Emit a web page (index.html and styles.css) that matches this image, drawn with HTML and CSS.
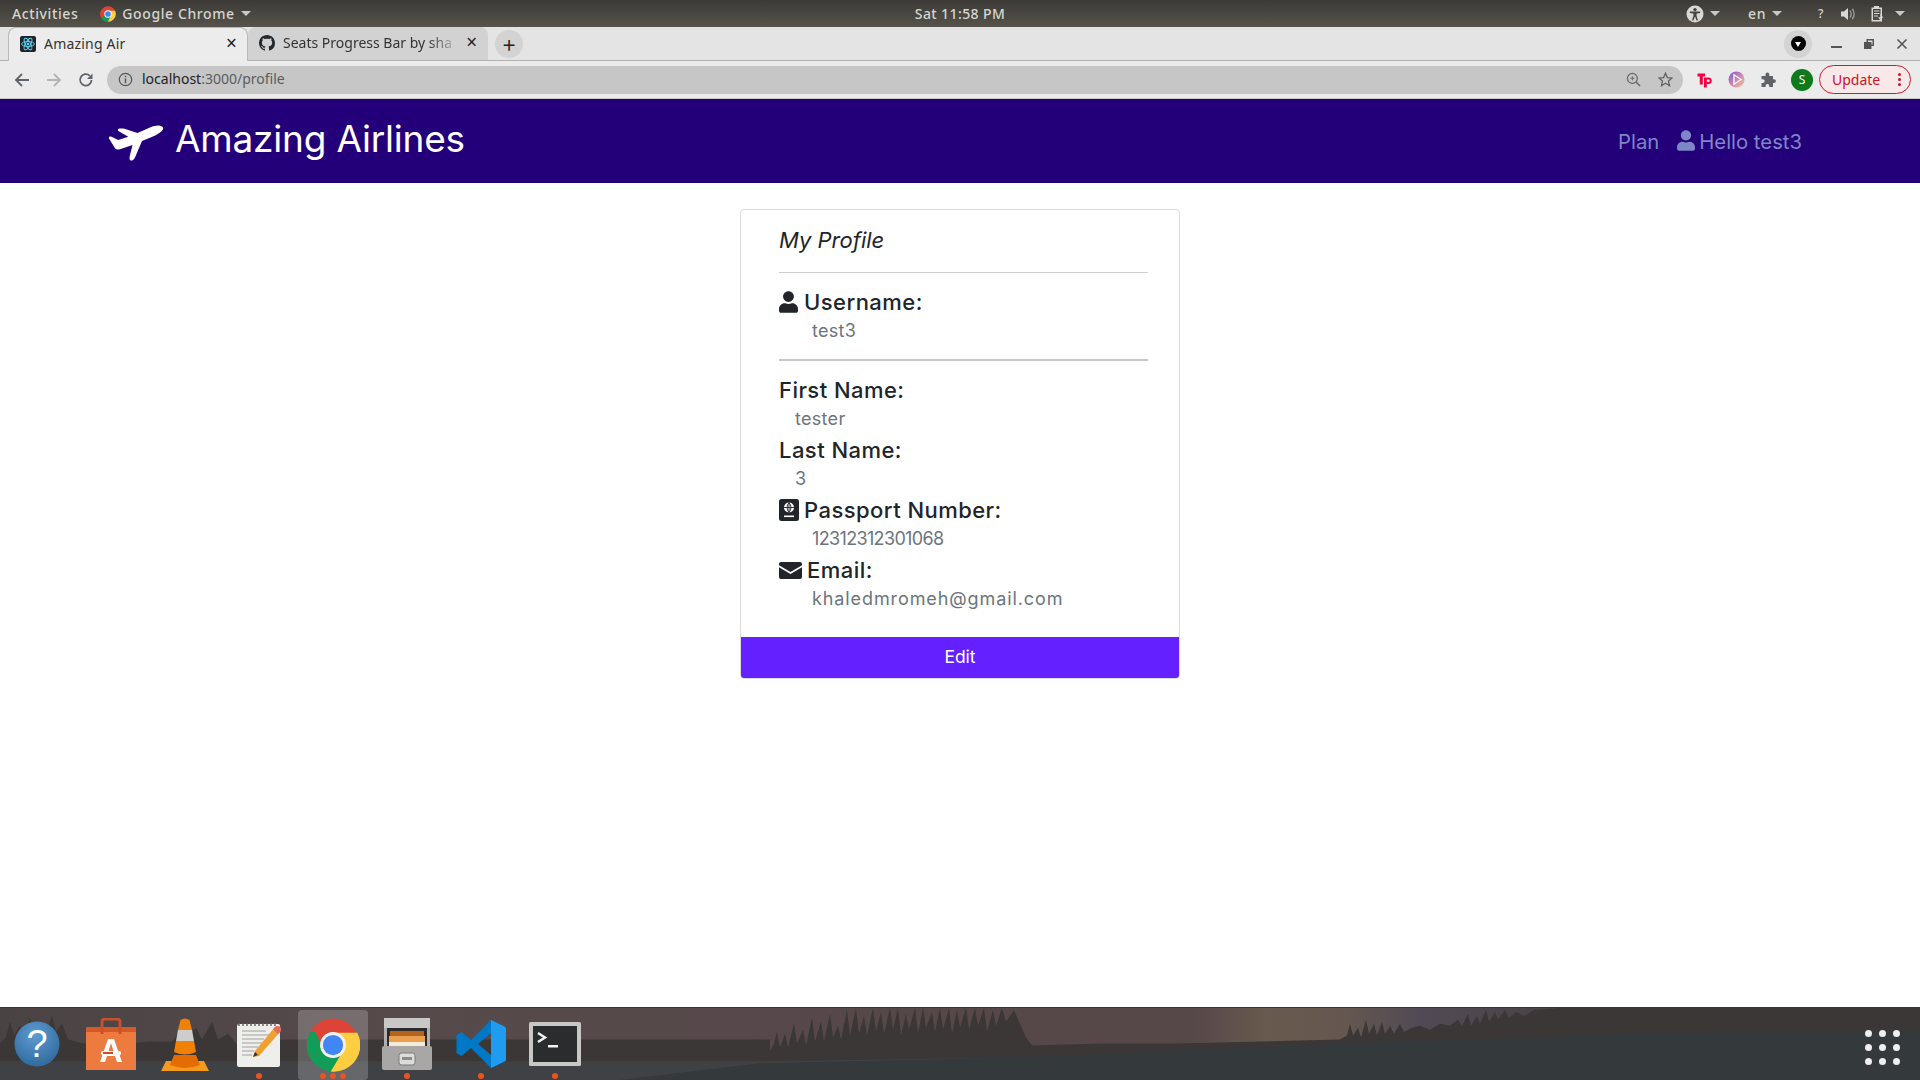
FILE: index.html
```html
<!DOCTYPE html>
<html>
<head>
  <meta charset="utf-8">
  <title>Amazing Air</title>
  <link rel="stylesheet" href="styles.css">
</head>
<body>
  <div class="screen">
    <div class="topbar">
      <div class="topbar-left">
        <span class="top-item">Activities</span>
        <span class="top-item app-menu">
          <svg class="top-chrome" viewBox="0 0 48 48"><circle cx="24" cy="24" r="23" fill="#db4437"/><path d="M24 24 L4 36 A23 23 0 0 1 4 12 Z" fill="#db4437"/><path d="M24 24 L4 35 A23 23 0 0 0 24 47 L36 26 Z" fill="#0f9d58"/><path d="M24 14 H45 A23 23 0 0 1 24 47 L34 26 Z" fill="#ffcd40"/><circle cx="24" cy="24" r="11" fill="#fff"/><circle cx="24" cy="24" r="8.5" fill="#4285f4"/></svg>
          Google Chrome<i class="caret"></i>
        </span>
      </div>
      <span class="top-clock">Sat 11:58 PM</span>
      <div class="topbar-right">
        <span class="tray-a11y">
          <svg width="18" height="18" viewBox="0 0 18 18"><circle cx="9" cy="9" r="8.5" fill="#d8d8d4"/><circle cx="9" cy="4.6" r="1.7" fill="#47453f"/><path d="M3.8 6.6 H14.2 V8 L10.6 8.6 V11 L12 15.5 H10.6 L9 11.6 L7.4 15.5 H6 L7.4 11 V8.6 L3.8 8 Z" fill="#47453f"/></svg>
          <i class="caret"></i>
        </span>
        <span class="tray-lang">en<i class="caret"></i></span>
        <span class="tray-help">?</span>
        <svg class="tray-vol" width="16" height="16" viewBox="0 0 16 16"><path d="M1 5.5 H4 L8 2 V14 L4 10.5 H1 Z" fill="#d8d8d4"/><path d="M10 4.5 Q12.4 8 10 11.5 M12.4 2.8 Q15.8 8 12.4 13.2" stroke="#a5a49f" stroke-width="1.2" fill="none"/></svg>
        <span class="tray-batt">
          <svg width="14" height="18" viewBox="0 0 14 18"><path d="M4 1 H9 V2.5 H12 V16.5 H1.5 V2.5 H4 Z M3 4 V15 H10.5 V4 Z" fill="#d8d8d4" fill-rule="evenodd"/><path d="M4 6 H9.5 M4 8.5 H9.5 M4 11 H8" stroke="#d8d8d4" stroke-width="1.2"/><path d="M10 9 L13.5 12.5 L10.5 13 L12 17 L8 12.5 L10.5 12 Z" fill="#d8d8d4"/></svg>
          <i class="caret"></i>
        </span>
      </div>
    </div>

    <div class="tabstrip">
      <div class="tab tab-active">
        <svg class="favicon" viewBox="0 0 16 16"><rect width="16" height="16" rx="2" fill="#20232a"/><g fill="none" stroke="#61dafb" stroke-width=".9"><ellipse cx="8" cy="8" rx="6.4" ry="2.5"/><ellipse cx="8" cy="8" rx="6.4" ry="2.5" transform="rotate(60 8 8)"/><ellipse cx="8" cy="8" rx="6.4" ry="2.5" transform="rotate(120 8 8)"/></g><circle cx="8" cy="8" r="1.3" fill="#61dafb"/></svg>
        <span class="tab-title">Amazing Air</span>
        <span class="tab-close">×</span>
      </div>
      <div class="tab tab-idle">
        <svg class="favicon" viewBox="0 0 16 16"><path fill="#24292e" d="M8 0C3.58 0 0 3.58 0 8c0 3.54 2.29 6.53 5.47 7.59.4.07.55-.17.55-.38 0-.19-.01-.82-.01-1.49-2.01.37-2.53-.49-2.69-.94-.09-.23-.48-.94-.82-1.13-.28-.15-.68-.52-.01-.53.63-.01 1.08.58 1.23.82.72 1.21 1.87.87 2.33.66.07-.52.28-.87.51-1.07-1.78-.2-3.64-.89-3.64-3.95 0-.87.31-1.59.82-2.15-.08-.2-.36-1.02.08-2.12 0 0 .67-.21 2.2.82.64-.18 1.32-.27 2-.27s1.36.09 2 .27c1.53-1.04 2.2-.82 2.2-.82.44 1.1.16 1.92.08 2.12.51.56.82 1.27.82 2.15 0 3.07-1.87 3.75-3.65 3.95.29.25.54.73.54 1.48 0 1.07-.01 1.93-.01 2.2 0 .21.15.46.55.38A8.01 8.01 0 0 0 16 8c0-4.42-3.58-8-8-8z"/></svg>
        <span class="tab-title tab-fade">Seats Progress Bar by sha</span>
        <span class="tab-close">×</span>
      </div>
      <span class="new-tab">+</span>
      <span class="strip-space"></span>
      <span class="profile-dot"><i></i></span>
      <div class="win-controls">
        <i class="win-min"></i>
        <svg width="12" height="12" viewBox="0 0 12 12"><path d="M3.5 1 H11 V8 H8.5 V11 H1 V4 H3.5 Z M5 2.5 V4 H8.5 V6.5 H9.5 V2.5 Z" fill="#555" fill-rule="evenodd"/></svg>
        <svg width="12" height="12" viewBox="0 0 12 12"><path d="M1.5 1.5 L10.5 10.5 M10.5 1.5 L1.5 10.5" stroke="#555" stroke-width="1.6"/></svg>
      </div>
    </div>

    <div class="toolbar">
      <svg class="tool-btn" viewBox="0 0 16 16"><path d="M15 8 H2.5 M8 2 L2 8 L8 14" fill="none" stroke="#5f6368" stroke-width="1.8"/></svg>
      <svg class="tool-btn" viewBox="0 0 16 16"><path d="M1 8 H13.5 M8 2 L14 8 L8 14" fill="none" stroke="#b2b3b5" stroke-width="1.8"/></svg>
      <svg class="tool-btn" viewBox="0 0 16 16"><path d="M13.5 8 A5.7 5.7 0 1 1 11.8 3.8" fill="none" stroke="#5f6368" stroke-width="1.8"/><path d="M14.5 1.5 V7 H9 Z" fill="#5f6368"/></svg>
      <div class="omnibox">
        <svg class="omni-info" viewBox="0 0 16 16"><circle cx="8" cy="8" r="6.6" fill="none" stroke="#555" stroke-width="1.3"/><path d="M8 7 V12 M8 4 V5.6" stroke="#555" stroke-width="1.5"/></svg>
        <span class="url"><b>localhost</b>:3000/profile</span>
        <span class="strip-space"></span>
        <svg class="omni-icon" viewBox="0 0 16 16"><circle cx="6.8" cy="6.8" r="5.3" fill="none" stroke="#666" stroke-width="1.3"/><path d="M10.6 10.6 L15 15" stroke="#666" stroke-width="1.6"/><path d="M4.5 6.8 H9 M6.8 4.5 V9" stroke="#666" stroke-width="1"/></svg>
        <svg class="omni-icon" viewBox="0 0 16 16"><path d="M8 1.3 L10 5.9 L15 6.4 L11.2 9.7 L12.3 14.6 L8 12 L3.7 14.6 L4.8 9.7 L1 6.4 L6 5.9 Z" fill="none" stroke="#5f6368" stroke-width="1.4"/></svg>
      </div>
      <div class="ext-icons">
        <svg width="16" height="16" viewBox="0 0 16 16"><path d="M0.5 1.5 H8 V4.5 H5.8 V12.5 H2.8 V4.5 H0.5 Z" fill="#f5003c"/><path d="M7 5.5 H12 A3.3 3.3 0 0 1 12 12 H9.8 V15.5 H7 Z M9.8 7.5 V10 H11.5 A1.2 1.2 0 0 0 11.5 7.5 Z" fill="#f5003c" fill-rule="evenodd"/></svg>
        <svg width="17" height="17" viewBox="0 0 17 17"><defs><linearGradient id="playGrad" x1="0" y1="0" x2="1" y2="1"><stop offset="0" stop-color="#7a55c9"/><stop offset=".55" stop-color="#d68bb4"/><stop offset="1" stop-color="#f2cf8d"/></linearGradient></defs><circle cx="8.5" cy="8.5" r="8" fill="url(#playGrad)"/><path d="M6 3.8 L13 8.5 L6 13.2 Z" fill="none" stroke="#fff" stroke-width="1.3"/></svg>
        <svg width="16" height="16" viewBox="0 0 16 16"><path d="M5.5 2.5 A1.9 1.9 0 0 1 9.3 2.5 V4 H13 V7.2 H14 A1.9 1.9 0 0 1 14 11 H13 V15 H9.2 V13.7 A1.8 1.8 0 0 0 5.6 13.7 V15 H1.5 V11 H2.8 A1.9 1.9 0 0 0 2.8 7.2 H1.5 V4 H5.5 Z" fill="#5f6368"/></svg>
        <span class="avatar">S</span>
      </div>
      <div class="update-btn">Update<span class="update-dots"><i></i><i></i><i></i></span></div>
    </div>

    <nav class="navbar">
      <div class="brand">
        <svg class="brand-plane" viewBox="0 0 56 38"><path fill="#fff" d="M1 15.5 C0.5 14 2 13.2 3.5 13.8 L10.2 17 L20.3 13.7 L10.7 8.3 C9 7.2 10 6 11.5 5.6 C12.8 5.2 14.8 5.4 16.5 5.8 L29.5 10 L42.5 4.3 C46.5 2.8 51 1.6 54 3.6 C56.2 5.2 55 7 52 9.4 C49 11.6 45.5 13.4 42.6 14.4 L34 18 L27 34.5 C26 37 23.5 38.2 22.3 37.3 C21.2 36.5 21.4 34.5 22 32 L24.5 22 L12 26.2 C9.8 26.8 8.3 26.8 7.2 25.6 Z"/></svg>
        <span class="brand-name">Amazing Airlines</span>
      </div>
      <div class="nav-links">
        <a class="nav-link">Plan</a>
        <a class="nav-link nav-user">
          <svg class="nav-user-icon" viewBox="0 0 448 512"><path fill="#7d87c6" d="M224 256c70.700 0 128-57.300 128-128S294.700 0 224 0 96 57.300 96 128s57.300 128 128 128zm89.600 32h-16.700c-22.200 10.200-46.900 16-72.900 16s-50.600-5.800-72.900-16h-16.700C60.200 288 0 348.200 0 422.400V464c0 26.500 21.500 48 48 48h352c26.500 0 48-21.500 48-48v-41.600c0-74.200-60.200-134.400-134.400-134.400z"/></svg>
          Hello test3
        </a>
      </div>
    </nav>

    <main class="content">
      <section class="profile-card">
        <div class="card-body">
          <h2 class="card-title">My Profile</h2>
          <hr class="rule">
          <div class="field">
            <h3 class="field-label">
              <svg class="label-icon icon-user" viewBox="0 0 448 512"><path fill="#212529" d="M224 256c70.700 0 128-57.300 128-128S294.700 0 224 0 96 57.300 96 128s57.300 128 128 128zm89.600 32h-16.700c-22.200 10.200-46.900 16-72.900 16s-50.600-5.800-72.900-16h-16.700C60.200 288 0 348.200 0 422.400V464c0 26.500 21.500 48 48 48h352c26.500 0 48-21.500 48-48v-41.600c0-74.200-60.200-134.400-134.400-134.400z"/></svg>
              Username:
            </h3>
            <p class="field-value deep">test3</p>
          </div>
          <hr class="rule rule-thick">
          <div class="field">
            <h3 class="field-label">First Name:</h3>
            <p class="field-value">tester</p>
          </div>
          <div class="field">
            <h3 class="field-label">Last Name:</h3>
            <p class="field-value">3</p>
          </div>
          <div class="field">
            <h3 class="field-label">
              <svg class="label-icon icon-passport" viewBox="0 0 20 22"><rect width="20" height="22" rx="2.500" fill="#212529"/><circle cx="10" cy="8.500" r="5" fill="#fff"/><path d="M10 3.500 V13.500 M5 8.500 H15 M10 3.500 Q6 8.500 10 13.500 M10 3.500 Q14 8.500 10 13.500" stroke="#212529" stroke-width=".9" fill="none"/><rect x="5" y="16.500" width="10" height="1.600" fill="#fff"/></svg>
              Passport Number:
            </h3>
            <p class="field-value deep digits">12312312301068</p>
          </div>
          <div class="field">
            <h3 class="field-label">
              <svg class="label-icon icon-mail" viewBox="0 0 23 17"><path fill="#212529" d="M2 0 H21 A2 2 0 0 1 23 2 V3.200 L11.500 10 L0 3.200 V2 A2 2 0 0 1 2 0 Z M0 5.200 L11.500 12 L23 5.200 V15 A2 2 0 0 1 21 17 H2 A2 2 0 0 1 0 15 Z"/></svg>
              Email:
            </h3>
            <p class="field-value deep wide">khaledmromeh@gmail.com</p>
          </div>
        </div>
        <button class="edit-btn">Edit</button>
      </section>
    </main>

    <footer class="dock">
      <svg class="dock-scene" viewBox="0 0 1920 73" preserveAspectRatio="none">
        <defs>
          <linearGradient id="sky" x1="0" y1="0" x2="1" y2="0">
            <stop offset="0" stop-color="#4a4344"/><stop offset=".2" stop-color="#564a4b"/><stop offset=".62" stop-color="#564749"/>
            <stop offset=".66" stop-color="#685a4e"/><stop offset=".7" stop-color="#655750"/><stop offset=".74" stop-color="#514a55"/><stop offset=".8" stop-color="#4a4448"/><stop offset="1" stop-color="#333230"/>
          </linearGradient>
        </defs>
        <rect width="1920" height="73" fill="url(#sky)"/>
        <g fill="#3a3736">
          <path d="M0 36 L6 30 L10 14 L14 28 L20 18 L24 30 L30 10 L34 26 L40 14 L45 30 L52 8 L56 24 L62 16 L68 32 L84 36 L96 30 L102 22 L108 34 L118 26 L126 36 L150 34 L172 34 L180 24 L186 32 L196 20 L202 32 L212 14 L218 32 L228 26 L236 36 L262 36 L282 32 L300 32 V60 H0 Z"/>
          <path d="M300 32 H770 V55 H300 Z"/>
          <path d="M770 44 L774 36 L777 24 L780 40 L785 26 L788 40 L794 16 L797 36 L803 22 L806 38 L812 10 L815 34 L821 14 L824 34 L830 6 L833 30 L838 18 L841 32 L847 2 L850 28 L856 0 L859 26 L864 8 L867 28 L873 0 L876 24 L881 4 L884 26 L890 0 L893 22 L898 0 L901 28 L906 6 L909 22 L915 0 L918 26 L923 0 L926 20 L932 4 L935 24 L940 0 L943 22 L949 0 L952 26 L957 2 L960 20 L966 0 L969 22 L975 0 L978 18 L984 0 L987 24 L993 2 L996 18 L1002 0 L1006 14 L1014 2 L1020 16 L1026 30 L1032 38 L1100 36 L1180 36 L1260 34 L1340 32 L1347 28 L1350 16 L1353 28 L1358 20 L1361 30 L1366 12 L1369 26 L1374 16 L1377 28 L1382 14 L1385 26 L1390 18 L1394 26 L1400 16 L1404 24 L1412 20 L1420 18 L1430 22 L1440 16 L1450 18 L1458 12 L1462 18 L1468 6 L1471 18 L1477 8 L1480 16 L1486 2 L1489 14 L1495 4 L1498 12 L1505 2 L1509 10 L1516 4 L1524 8 L1534 2 L1560 0 L1920 0 V60 H1032 V55 H770 Z"/>
        </g>
        <path fill="#3f4145" d="M0 54 H760 L1030 50 L1300 38 L1640 26 L1920 22 V73 H0 Z"/>
        <path fill="#34393b" d="M620 73 L760 56 L1030 50 L1300 38 L1640 26 L1920 22 V73 Z"/>
      </svg>
      <div class="dock-apps">
        <div class="dock-app app-help"><svg width="46" height="46" viewBox="0 0 46 46"><defs><radialGradient id="helpBall" cx=".45" cy=".3" r=".8"><stop offset="0" stop-color="#5d9bd1"/><stop offset="1" stop-color="#2c6597"/></radialGradient></defs><circle cx="23" cy="23" r="22.500" fill="url(#helpBall)"/><text x="23" y="36" class="help-mark">?</text></svg></div>
        <div class="dock-app app-store"><svg width="50" height="52" viewBox="0 0 50 52"><rect x="0" y="9" width="50" height="43" fill="#ed7a3e"/><path d="M0 9 H50 V14 H0 Z" fill="#d55a2a"/><path d="M16 16 V4 Q16 1 19 1 H31 Q34 1 34 4 V16" fill="none" stroke="#c9502a" stroke-width="3"/><path d="M22 21 H28 L36 44 H31 L29 38 H21 L19 44 H14 Z M22.500 33 H27.500 L25 25 Z" fill="#fff" fill-rule="evenodd"/><rect x="15" y="33" width="20" height="4" rx="1.500" fill="#fff"/><rect x="17" y="34" width="10" height="2" fill="#d8452c"/></svg></div>
        <div class="dock-app app-vlc"><svg width="48" height="54" viewBox="0 0 48 54"><path d="M0 54 L5 44 H43 L48 54 Z" fill="#f39a1f"/><path d="M9 48 Q24 54 39 48 L35 38 H13 Z" fill="#e36d02"/><path d="M19.500 3 Q24 0 28.500 3 L31 13 H17 Z" fill="#f08105"/><path d="M17 13 H31 L33 24 H15 Z" fill="#cdcdcd"/><path d="M15 24 H33 L35 35 Q24 40 13 35 Z" fill="#f08105"/></svg></div>
        <div class="dock-app app-notes"><svg width="46" height="48" viewBox="0 0 46 48"><rect x="1" y="4" width="43" height="43" rx="2" fill="#eeeeea"/><path d="M3 3 V6 M7 3 V6 M11 3 V6 M15 3 V6 M19 3 V6 M23 3 V6 M27 3 V6 M31 3 V6 M35 3 V6 M39 3 V6" stroke="#666" stroke-width="1.500"/><path d="M6 11 H30 M6 15 H34 M6 19 H28 M6 23 H26 M6 27 H22 M6 31 H18 M6 35 H16" stroke="#bbb" stroke-width="1.500"/><path d="M17 37 L19 31 L39 7 Q42 5 44 7 Q46 9 44 12 L23 36 Z" fill="#f0a030"/><path d="M39 7 Q42 5 44 7 Q46 9 44 12 L42 14 L37 9 Z" fill="#e46b5d"/><path d="M17 37 L19 32 L22 35 Z" fill="#333"/></svg></div>
        <div class="dock-app app-chrome"><svg width="54" height="54" viewBox="0 0 48 48"><circle cx="24" cy="24" r="23.500" fill="#db4437"/><path d="M24 24 L4 35.500 A23.500 23.500 0 0 0 24 47.500 L36 27 Z" fill="#0f9d58"/><path d="M4 12 A23.500 23.500 0 0 0 4 36 L16 28 L8 12 Z" fill="#0f9d58"/><path d="M24 13 H45.500 A23.500 23.500 0 0 1 22 47.500 L33 29 Z" fill="#ffcd40"/><circle cx="24" cy="24" r="11.500" fill="#f1f1f1"/><circle cx="24" cy="24" r="9" fill="#4285f4"/></svg></div>
        <div class="dock-app app-files"><svg width="50" height="52" viewBox="0 0 50 52"><path d="M2 3 Q2 0 5 0 H45 Q48 0 48 3 V50 Q48 52 46 52 H4 Q2 52 2 50 Z" fill="#b1b0ae"/><rect x="2" y="0" width="46" height="10" fill="#c8c8c6"/><rect x="5" y="10" width="40" height="19" fill="#2b2b2b"/><rect x="8" y="13" width="34" height="5" fill="#b5641c"/><rect x="7" y="18" width="36" height="6" fill="#e8a050"/><rect x="7" y="24" width="36" height="4" fill="#f4ead8"/><rect x="0" y="28" width="50" height="24" rx="2" fill="#a8a7a5"/><rect x="17" y="35" width="16" height="12" rx="2.500" fill="#dcdcda" stroke="#7a7a78"/><rect x="20" y="39" width="10" height="3" fill="#8c8c8a"/></svg></div>
        <div class="dock-app app-code"><svg width="50" height="50" viewBox="0 0 100 100"><path d="M70 2 L97 15 Q100 17 100 20 V80 Q100 84 97 85 L70 98 L30 58 L11 74 L1 68 V32 L11 26 L30 42 Z M70 28 L44 50 L70 72 Z" fill="#0078c8" fill-rule="evenodd"/><path d="M70 2 L97 15 Q100 17 100 20 V80 Q100 84 97 85 L70 98 Z" fill="#1f9cf0"/></svg></div>
        <div class="dock-app app-term"><svg width="52" height="44" viewBox="0 0 52 44"><rect width="52" height="44" rx="1.500" fill="#c7c7c5"/><rect x="4" y="4" width="44" height="36" fill="#2a2c2d"/><path d="M9 11 L16 15.500 L9 20" fill="none" stroke="#f2f2f2" stroke-width="2.500"/><rect x="19" y="23" width="10" height="2.500" fill="#f2f2f2"/></svg></div>
      </div>
      <div class="dock-grid"><i></i><i></i><i></i><i></i><i></i><i></i><i></i><i></i><i></i></div>
    </footer>
  </div>
</body>
</html>
```

FILE: styles.css
```css
* {
  box-sizing: border-box;
}
html, body {
  margin: 0;
  height: 100%;
}
body {
  font: 16px "Inter", "Liberation Sans", sans-serif;
  color: #212529;
  background: #fff;
  overflow: hidden;
}
.screen {
  display: flex;
  flex-direction: column;
  height: 1080px;
}
svg {
  display: block;
  flex: none;
}

/* desktop top bar */
.topbar {
  position: relative;
  display: flex;
  align-items: center;
  justify-content: space-between;
  height: 27px;
  padding: 0 12px;
  background: linear-gradient(#3c3a36, #55534b);
  color: #d6d6d0;
  font: 500 14px "Noto Sans", sans-serif;
  letter-spacing: .6px;
}
.topbar-left {
  display: flex;
  align-items: center;
  gap: 22px;
}
.app-menu {
  display: flex;
  align-items: center;
}
.top-chrome {
  width: 16px;
  height: 16px;
  margin-right: 6px;
}
.top-clock {
  position: absolute;
  left: 0;
  right: 0;
  text-align: center;
  letter-spacing: .4px;
}
.topbar-right {
  display: flex;
  align-items: center;
  margin-right: 3px;
}
.caret {
  display: inline-block;
  width: 0;
  height: 0;
  margin-left: 6px;
  border-left: 5px solid transparent;
  border-right: 5px solid transparent;
  border-top: 5px solid #c9c9c4;
}
.tray-a11y {
  display: flex;
  align-items: center;
  margin-right: 28px;
}
.tray-lang {
  display: flex;
  align-items: center;
  margin-right: 36px;
}
.tray-help {
  margin-right: 16px;
  font-size: 12px;
}
.tray-vol {
  margin-right: 14px;
}
.tray-batt {
  display: flex;
  align-items: center;
}
.tray-batt .caret {
  margin-left: 11px;
}

/* chrome tabs */
.tabstrip {
  display: flex;
  align-items: flex-end;
  height: 34px;
  padding-left: 8px;
  background: #e4e4e4;
  border-bottom: 1px solid #b1b1b1;
}
.tab {
  display: flex;
  align-items: center;
  width: 240px;
  height: 33px;
  padding: 0 11px 2px 11px;
  font: 14px "Noto Sans", sans-serif;
  color: #333;
  border-radius: 8px 8px 0 0;
}
.tab-active {
  margin-bottom: -1px;
  height: 34px;
  background: #ececec;
  border: 1px solid #b9b9b9;
  border-bottom: 0;
  padding-right: 10px;
  letter-spacing: .2px;
}
.tab-idle {
  background: #d2d2d2;
}
.favicon {
  width: 16px;
  height: 16px;
  margin-right: 8px;
}
.tab-title {
  flex: 1;
  white-space: nowrap;
  overflow: hidden;
}
.tab-fade {
  -webkit-mask-image: linear-gradient(90deg, #000 82%, transparent);
  mask-image: linear-gradient(90deg, #000 82%, transparent);
}
.tab-close {
  margin-left: 6px;
  font-size: 19px;
  line-height: 1;
  color: #222;
}
.new-tab {
  display: flex;
  align-items: center;
  justify-content: center;
  align-self: center;
  width: 28px;
  height: 28px;
  margin-left: 7px;
  border-radius: 50%;
  background: #d3d3d3;
  font-size: 24px;
  font-weight: 300;
  color: #222;
}
.strip-space {
  flex: 1;
}
.profile-dot {
  display: flex;
  align-items: center;
  justify-content: center;
  align-self: center;
  width: 28px;
  height: 28px;
  border-radius: 50%;
  background: #d3d3d3;
}
.profile-dot i {
  display: flex;
  align-items: center;
  justify-content: center;
  width: 15px;
  height: 15px;
  border-radius: 50%;
  background: #000;
}
.profile-dot i::after {
  content: "";
  margin-top: 2px;
  border-left: 3.5px solid transparent;
  border-right: 3.5px solid transparent;
  border-top: 5px solid #fff;
}
.win-controls {
  display: flex;
  align-items: center;
  align-self: center;
  gap: 21px;
  margin: 0 12px 0 19px;
}
.win-min {
  width: 11px;
  height: 2px;
  margin-top: 7px;
  background: #555;
}

/* chrome toolbar */
.toolbar {
  display: flex;
  align-items: center;
  height: 38px;
  padding: 0 8px 0 14px;
  background: #ebebeb;
  border-bottom: 1px solid #c8c8c8;
}
.tool-btn {
  width: 16px;
  height: 16px;
  margin-right: 16px;
}
.omnibox {
  display: flex;
  align-items: center;
  width: 1576px;
  height: 28px;
  margin-left: -3px;
  padding: 0 10px 0 11px;
  border-radius: 14px;
  background: #c6c6c6;
}
.omni-info {
  width: 15px;
  height: 15px;
  margin-right: 9px;
}
.url {
  padding-bottom: 2px;
  font: 14px "Noto Sans", sans-serif;
  color: #5c5c5c;
}
.url b {
  font-weight: 400;
  color: #222;
}
.omni-icon {
  width: 15px;
  height: 15px;
  margin-left: 17px;
}
.ext-icons {
  display: flex;
  align-items: center;
  gap: 15px;
  margin-left: 14px;
}
.avatar {
  display: flex;
  align-items: center;
  justify-content: center;
  width: 22px;
  height: 22px;
  border-radius: 50%;
  background: #0f7a1b;
  color: #fff;
  font: 12px "Noto Sans", sans-serif;
}
.update-btn {
  display: flex;
  align-items: center;
  justify-content: space-between;
  width: 92px;
  height: 29px;
  margin-left: 6px;
  padding: 0 9px 0 12px;
  border: 1px solid #d11a2a;
  border-radius: 15px;
  background: #f8e8e8;
  color: #d01025;
  font: 14px "Noto Sans", sans-serif;
}
.update-dots {
  display: flex;
  flex-direction: column;
  gap: 2px;
}
.update-dots i {
  width: 3px;
  height: 3px;
  border-radius: 50%;
  background: #d01025;
}

/* site navbar */
.navbar {
  display: flex;
  align-items: center;
  justify-content: space-between;
  height: 84px;
  padding: 0 118px 0 108px;
  background: #23007a;
}
.brand {
  display: flex;
  align-items: center;
  gap: 11px;
  margin-top: -5px;
}
.brand-plane {
  width: 56px;
  height: 38px;
  margin-top: 6px;
}
.brand-name {
  font: 400 37px "Inter", sans-serif;
  letter-spacing: -.2px;
  color: #fff;
}
.nav-links {
  display: flex;
  align-items: center;
  gap: 18px;
  font-size: 20.3px;
  color: #7d87c6;
}
.nav-user {
  display: flex;
  align-items: center;
  gap: 4px;
}
.nav-user-icon {
  width: 18px;
  height: 21px;
  margin-top: -2px;
}

/* profile card */
.content {
  flex: 1;
  display: flex;
  justify-content: center;
  padding-top: 26px;
}
.profile-card {
  display: flex;
  flex-direction: column;
  justify-content: space-between;
  width: 440px;
  height: 470px;
  border: 1px solid #dcdcdc;
  border-radius: 4px;
  overflow: hidden;
}
.card-body {
  padding: 14px 31px 0 38px;
}
.card-title {
  margin: 0;
  height: 32px;
  font: italic 400 22px/32px "Inter", sans-serif;
  color: #212529;
}
.rule {
  margin: 16px 0 0;
  border: 0;
  border-top: 1px solid #cfcfcf;
}
.rule-thick {
  margin-top: 16px;
  border-top: 2px solid #c8c8c8;
}
.field {
  margin-top: 14px;
}
.field + .field {
  margin-top: 4px;
}
.rule + .field {
  margin-top: 14px;
}
.field-label {
  display: flex;
  align-items: center;
  gap: 5px;
  margin: 0;
  height: 32px;
  padding-bottom: 2px;
  font: 500 22px/30px "Inter", sans-serif;
  letter-spacing: .45px;
}
.field-value {
  margin: 0;
  height: 24px;
  padding-left: 16px;
  font: 400 18px/24px "Inter", sans-serif;
  letter-spacing: .3px;
  color: #6c757d;
}
.field-value.deep {
  padding-left: 33px;
}
.field-value.digits {
  letter-spacing: -.65px;
}
.field-value.wide {
  letter-spacing: .9px;
}
.label-icon {
  height: 22px;
}
.icon-user {
  width: 19px;
  margin-right: 1px;
}
.icon-passport {
  width: 20px;
}
.icon-mail {
  width: 23px;
  height: 17px;
}
.edit-btn {
  height: 41px;
  padding: 0 0 2px;
  border: 0;
  background: #6420ff;
  color: #fff;
  font: 400 17.5px "Inter", sans-serif;
}

/* ubuntu dock */
.dock {
  position: relative;
  flex: none;
  height: 73px;
  border-top: 1px solid #3a3735;
  overflow: hidden;
}
.dock-scene {
  position: absolute;
  top: 0;
  left: 0;
  width: 100%;
  height: 100%;
}
.dock-apps {
  position: relative;
  display: flex;
  align-items: stretch;
  height: 100%;
}
.dock-app {
  position: relative;
  display: flex;
  align-items: center;
  justify-content: center;
  width: 74px;
}
.app-chrome {
  background: rgba(255, 255, 255, .2);
  border-radius: 4px;
  width: 70px;
  margin: 2px 2px 0;
}
.app-notes::after,
.app-files::after,
.app-code::after,
.app-term::after,
.app-chrome::after {
  content: "";
  position: absolute;
  bottom: 1px;
  left: 50%;
  width: 6px;
  height: 6px;
  margin-left: -3px;
  border-radius: 50%;
  background: #e95420;
}
.app-chrome::after {
  box-shadow: -10px 0 #e95420, 10px 0 #e95420;
}
.help-mark {
  font: 400 38px "Liberation Sans", sans-serif;
  fill: #fff;
  text-anchor: middle;
}
.dock-grid {
  position: absolute;
  top: 22px;
  left: 1865px;
  display: grid;
  grid-template-columns: repeat(3, 7px);
  grid-auto-rows: 7px;
  gap: 7px;
}
.dock-grid i {
  border-radius: 50%;
  background: #efefef;
}
```
